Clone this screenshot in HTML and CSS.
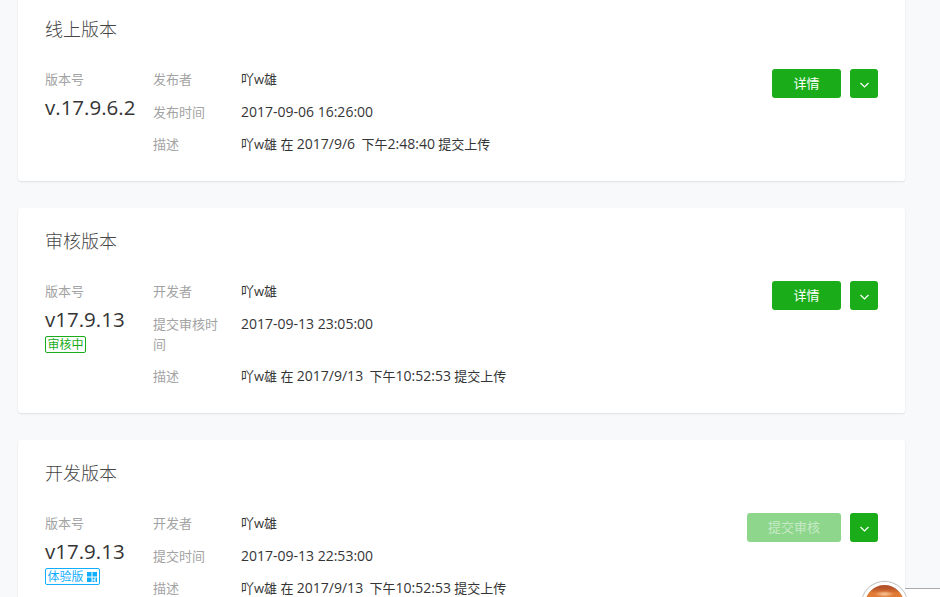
FILE: index.html
```html
<!DOCTYPE html>
<html lang="en">
  <head>
    <meta charset="UTF-8" />
    <meta name="viewport" content="width=device-width, initial-scale=1.0" />
    <title>版本管理</title>
    <link rel="stylesheet" href="styles.css">
  </head>
  <body>
    <div class="page">
      <section class="card">
        <h2 class="card-title">线上版本</h2>
        <div class="card-body">
          <div class="version">
            <div class="label">版本号</div>
            <div class="version-no">v.17.9.6.2</div>
          </div>
          <dl class="info">
            <dt>发布者</dt>
            <dd>吖w雄</dd>
            <dt>发布时间</dt>
            <dd><span class="num">2017-09-06 16:26:00</span></dd>
            <dt>描述</dt>
            <dd>吖w雄 在 <span class="num day">2017/9/6</span> 下午<span class="num">2:48:40</span> 提交上传</dd>
          </dl>
          <div class="actions">
            <button class="btn">详情</button>
            <button class="btn-more">
              <svg width="9" height="6" viewBox="0 0 9 6"><path d="M.5 1l4 4 4-4" /></svg>
            </button>
          </div>
        </div>
      </section>

      <section class="card">
        <h2 class="card-title">审核版本</h2>
        <div class="card-body">
          <div class="version">
            <div class="label">版本号</div>
            <div class="version-no">v17.9.13</div>
            <span class="tag tag-green">审核中</span>
          </div>
          <dl class="info">
            <dt>开发者</dt>
            <dd>吖w雄</dd>
            <dt>提交审核时间</dt>
            <dd><span class="num">2017-09-13 23:05:00</span></dd>
            <dt>描述</dt>
            <dd>吖w雄 在 <span class="num day">2017/9/13</span> 下午<span class="num">10:52:53</span> 提交上传</dd>
          </dl>
          <div class="actions">
            <button class="btn">详情</button>
            <button class="btn-more">
              <svg width="9" height="6" viewBox="0 0 9 6"><path d="M.5 1l4 4 4-4" /></svg>
            </button>
          </div>
        </div>
      </section>

      <section class="card">
        <h2 class="card-title">开发版本</h2>
        <div class="card-body">
          <div class="version">
            <div class="label">版本号</div>
            <div class="version-no">v17.9.13</div>
            <span class="tag tag-blue">体验版
              <svg width="12" height="12" viewBox="0 0 12 12"><path d="M1 1h4.5v4.5H1zM6.5 1H11v4.5H6.5zM1 6.5h4.5V11H1zM6.5 6.5h2v2h-2zM9.5 6.5H11V11H9.5zM6.5 9.5h2V11h-2z" /></svg>
            </span>
          </div>
          <dl class="info">
            <dt>开发者</dt>
            <dd>吖w雄</dd>
            <dt>提交时间</dt>
            <dd><span class="num">2017-09-13 22:53:00</span></dd>
            <dt>描述</dt>
            <dd>吖w雄 在 <span class="num day">2017/9/13</span> 下午<span class="num">10:52:53</span> 提交上传</dd>
          </dl>
          <div class="actions">
            <button class="btn btn-disabled">提交审核</button>
            <button class="btn-more">
              <svg width="9" height="6" viewBox="0 0 9 6"><path d="M.5 1l4 4 4-4" /></svg>
            </button>
          </div>
        </div>
      </section>
    </div>

    <div class="float-bar"></div>
    <div class="float-avatar"></div>
  </body>
</html>
```

FILE: styles.css
```css
html,
body {
  height: 100%;
}
body {
  font-family: "Open Sans", "Noto Sans CJK SC", sans-serif;
  font-size: 13px;
  line-height: 20px;
  color: #353535;
  background-color: #f8f9fb;
  margin: 0;
  overflow: hidden;
}
.page {
  width: 887px;
  margin: -4px 0 0 18px;
}
.card {
  background: white;
  border-radius: 3px;
  box-shadow: 0 1px 2px rgba(0, 0, 0, 0.1);
  padding: 20px 27px 27px;
  margin-bottom: 27px;
}
.card-title {
  font-size: 18px;
  font-weight: 300;
  line-height: 26px;
  color: #454545;
  margin: 0 0 27px;
}
.card-body {
  display: flex;
  align-items: flex-start;
}
.version {
  width: 108px;
  flex-shrink: 0;
}
.label {
  color: #a3a3a3;
}
.version-no {
  font-size: 20.5px;
  line-height: 28px;
  margin: 4px 0 1px;
}
.num {
  font-size: 14px;
}
.day {
  margin-right: 3px;
}
.tag {
  display: inline-flex;
  align-items: center;
  gap: 2px;
  height: 17px;
  padding: 0 1.5px;
  border: 1px solid;
  border-radius: 2px;
  font-size: 12px;
  line-height: 15px;
  box-sizing: border-box;
}
.tag-green {
  color: #1aad19;
  border-color: #1aad19;
}
.tag-blue {
  color: #10aeff;
  border-color: #10aeff;
}
.tag-blue svg {
  fill: #10aeff;
}
.info {
  flex: 1;
  display: grid;
  grid-template-columns: 68px 1fr;
  column-gap: 20px;
  row-gap: 12.5px;
  margin: 0;
}
.info dt {
  color: #a3a3a3;
}
.info dd {
  margin: 0;
}
.actions {
  display: flex;
  gap: 9px;
}
.btn {
  width: 69px;
  height: 29px;
  font-family: inherit;
  font-size: 13px;
  line-height: 26px;
  color: white;
  background-color: #1aad19;
  border: none;
  border-radius: 3px;
  padding: 0 0 2px;
}
.btn-disabled {
  width: 94px;
  background-color: #8dd68c;
  color: #c6eac5;
}
.btn-more {
  width: 28px;
  height: 29px;
  display: flex;
  align-items: center;
  justify-content: center;
  background-color: #1aad19;
  border: none;
  border-radius: 3px;
  padding: 0;
}
.btn-more svg {
  fill: none;
  stroke: white;
  stroke-width: 1.2;
  margin-top: 3px;
}
.float-bar {
  position: fixed;
  left: 905px;
  right: 0;
  top: 588px;
  bottom: 0;
  background: white;
  border-top: 1px solid #aaa;
}
.float-avatar {
  position: fixed;
  left: 862px;
  top: 582px;
  width: 45px;
  height: 45px;
  box-sizing: border-box;
  border-radius: 50%;
  background: radial-gradient(ellipse 10px 3px at 50% 9px, #f6c9a0, transparent),
    linear-gradient(#b5522a 3px, #e07a35 8px, #f08a3c);
  border: 3px solid white;
  box-shadow: 0 0 1px 1px #b8b8b8;
}
```
